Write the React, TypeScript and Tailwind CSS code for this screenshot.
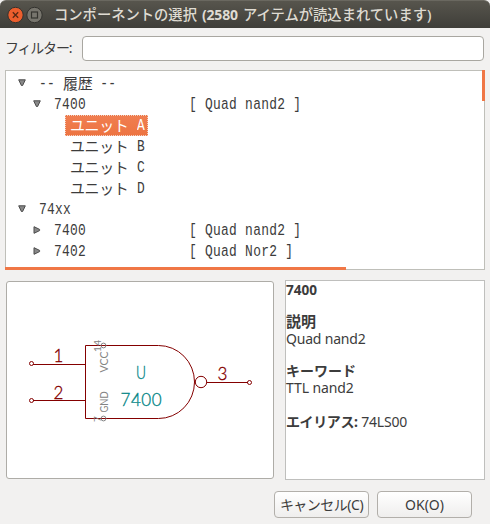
import React from "react";

const ui = "font-['Noto_Sans','Noto_Sans_CJK_JP',sans-serif]";

function Mono({ children }: { children: React.ReactNode }) {
  return (
    <span className="inline-block origin-center scale-y-[1.22] whitespace-pre font-['Liberation_Mono','Noto_Sans_CJK_JP',monospace] text-[12.9px] leading-[21px] tracking-[0.28px]">
      {children}
    </span>
  );
}

function Kana({ children }: { children: React.ReactNode }) {
  return (
    <span className="-mt-[2px] inline-block font-['Noto_Sans_CJK_JP',sans-serif] text-[15px] leading-[21px] tracking-[-0.4px]">
      {children}
    </span>
  );
}

function Arrow({ open }: { open: boolean }) {
  return (
    <svg width="8" height="8" viewBox="0 0 8 8" className={`shrink-0 ${open ? "-mt-[2px]" : "-mt-px"}`}>
      <path
        d={open ? "M0.7 0.8H7.3L4.6 6.5H3.4Z" : "M1 0.7V7.3L6.6 4.6V3.4Z"}
        fill="#888"
        stroke="#4a4a4a"
        strokeWidth="1"
      />
    </svg>
  );
}

function Part({ name, desc }: { name: string; desc: string }) {
  return (
    <>
      <span className="flex w-[135px] shrink-0"><Mono>{name}</Mono></span>
      <Mono>{desc}</Mono>
    </>
  );
}

function Branch({ open, level, children }: { open: boolean; level: number; children: React.ReactNode }) {
  return (
    <div className={`flex h-[21px] shrink-0 items-center gap-[13px] ${level ? "pl-[27px]" : "pl-[12px]"}`}>
      <Arrow open={open} />
      <div className="flex h-[21px] items-center">{children}</div>
    </div>
  );
}

function Unit({ letter, selected }: { letter: string; selected?: boolean }) {
  return (
    <div className="flex h-[21px] shrink-0 pl-[59px]">
      <div
        className={`flex h-[21px] w-[83px] items-center border border-dotted pl-[4px] ${
          selected ? "border-[#f3d3c4] bg-gradient-to-b from-[#f07e50] to-[#ed7442] text-white" : "border-transparent"
        }`}
      >
        <span className="flex w-[67px] shrink-0"><Kana>ユニット</Kana></span>
        <Mono>{letter}</Mono>
      </div>
    </div>
  );
}

function Schematic() {
  return (
    <svg width="266" height="196" viewBox="7 282 266 196" className="font-['Lato',sans-serif]" fill="none">
      <g stroke="#840000" strokeWidth="1">
        <path d="M158.5 345.5H85.5V418.5H158.5A36 36.5 0 0 0 158.5 345.5" />
        <path d="M33 364.5H85M33 400.5H85M207 382.5H248" />
        <circle cx="31.5" cy="363.5" r="2" />
        <circle cx="31.5" cy="400.5" r="2" />
        <circle cx="249.5" cy="382.5" r="2" />
        <circle cx="201" cy="382" r="5.7" />
      </g>
      <g stroke="#848484" strokeWidth="1">
        <circle cx="103.5" cy="345.5" r="2.4" />
        <circle cx="103.5" cy="418.5" r="2.4" />
      </g>
      <g fill="#840000" stroke="#840000" strokeWidth="0.35" fontSize="17" fontWeight="300" textAnchor="middle">
        <text x="58.5" y="362">1</text>
        <text x="58.5" y="399">2</text>
        <text x="222.5" y="380">3</text>
      </g>
      <g fill="#008484" stroke="#008484" strokeWidth="0.3" fontSize="17" fontWeight="300">
        <text x="136" y="379" textLength="10" lengthAdjust="spacingAndGlyphs">U</text>
        <text x="120.5" y="405.5" textLength="41" lengthAdjust="spacing">7400</text>
      </g>
      <g fill="#848484" fontSize="11">
        <text transform="translate(108 372.5) rotate(-90)" textLength="21" lengthAdjust="spacingAndGlyphs">VCC</text>
        <text transform="translate(108 412.5) rotate(-90)" textLength="21" lengthAdjust="spacingAndGlyphs">GND</text>
        <text transform="translate(101 352) rotate(-90)" fontSize="10" textLength="12">14</text>
        <text transform="translate(101 422) rotate(-90)" fontSize="10">7</text>
      </g>
    </svg>
  );
}

export default function App() {
  return (
    <div className={`flex h-[524px] w-[490px] flex-col overflow-hidden bg-[#f2f1f0] text-[#3c3c3c] ${ui}`}>
      <header className="flex h-[28px] shrink-0 items-center rounded-t-[6px] border-t border-[#6a6860] bg-gradient-to-b from-[#57554d] to-[#3f3e39] pl-[7px] text-[#dfdbd2]">
        <svg width="36" height="18" viewBox="0 0 36 18" fill="none" className="shrink-0">
          <circle cx="8.5" cy="9" r="7.7" fill="#ec5e2d" stroke="#33322e" />
          <path d="M5.8 6.3l5.4 5.4M11.2 6.3l-5.4 5.4" stroke="#562814" strokeWidth="1.3" />
          <circle cx="27.5" cy="9" r="7.7" fill="#77756d" stroke="#33322e" />
          <rect x="24.5" y="6" width="6" height="6" stroke="#35342f" strokeWidth="1.2" />
        </svg>
        <h1 className="ml-[11px] flex whitespace-pre text-[14px] font-bold leading-[26px]">
          <span className="w-[148px] text-[14.3px] font-medium">コンポーネントの選択</span>
          <span className="w-[41px] tracking-[-0.2px]">(2580</span>
          <span className="text-[14.3px] font-medium">アイテムが読込まれています)</span>
        </h1>
      </header>

      <div className="flex h-[42px] shrink-0 items-center pl-[5px] pr-[6px]">
        <label className="-mt-[3px] w-[77px] whitespace-nowrap text-[14px] leading-[24px] tracking-[-1.2px]">フィルター:</label>
        <input className="-mt-px h-[25px] min-w-0 flex-1 rounded-[4px] border border-[#a9a7a1] bg-white outline-none" />
      </div>

      <div className="relative mx-[5px] h-[200px] shrink-0">
        <div className="flex h-[200px] flex-col overflow-hidden border border-[#bfbfb9] bg-white pt-[2px]">
          <Branch open level={0}>
            <Mono>-- </Mono><Kana>履歴</Kana><Mono> --</Mono>
          </Branch>
          <Branch open level={1}><Part name="7400" desc="[ Quad nand2 ]" /></Branch>
          <Unit letter="A" selected />
          <Unit letter="B" />
          <Unit letter="C" />
          <Unit letter="D" />
          <Branch open level={0}><Mono>74xx</Mono></Branch>
          <Branch open={false} level={1}><Part name="7400" desc="[ Quad nand2 ]" /></Branch>
          <Branch open={false} level={1}><Part name="7402" desc="[ Quad Nor2 ]" /></Branch>
          <div className="-mt-[2px] h-[21px] shrink-0 pl-[48px]"><Mono>74469</Mono></div>
        </div>
        <div className="absolute bottom-0 left-0 h-[3px] w-[341px] bg-[#f07746]" />
        <div className="absolute right-0 top-0 h-[31px] w-[3px] bg-[#f07746]" />
      </div>

      <div className="flex h-[210px] shrink-0 pl-[6px] pr-[5px] pt-[10px]">
        <div className="mt-px h-[198px] w-[268px] shrink-0 overflow-hidden rounded-[3px] border border-[#aeaca7] bg-white">
          <Schematic />
        </div>
        <div className="ml-[11px] h-[200px] flex-1 whitespace-nowrap border border-[#bfbfbd] bg-white text-[14px] leading-[17px]">
          <p className="text-[13.6px] font-bold">7400</p>
          <p className="mt-[15px] text-[15px] font-bold">説明</p>
          <p className="tracking-[-0.2px]">Quad nand2</p>
          <p className="mt-[15px] text-[14px] font-bold">キーワード</p>
          <p className="tracking-[-0.1px]">TTL nand2</p>
          <p className="mt-[17px]"><b className="text-[14px] tracking-[-0.4px]">エイリアス:</b> <span className="tracking-[-0.2px]">74LS00</span></p>
        </div>
      </div>

      <div className="flex justify-end gap-[8px] pr-[18px] pt-[11px]">
        <button className="h-[27px] w-[95px] whitespace-nowrap rounded-[4px] border border-[#b2afaa] bg-gradient-to-b from-white to-[#efeeed] text-[14px] leading-[24px] tracking-[-0.5px]">キャンセル(C)</button>
        <button className="h-[27px] w-[95px] rounded-[4px] border border-[#b2afaa] bg-gradient-to-b from-white to-[#efeeed] text-[14px] leading-[24px]">OK(O)</button>
      </div>
    </div>
  );
}
